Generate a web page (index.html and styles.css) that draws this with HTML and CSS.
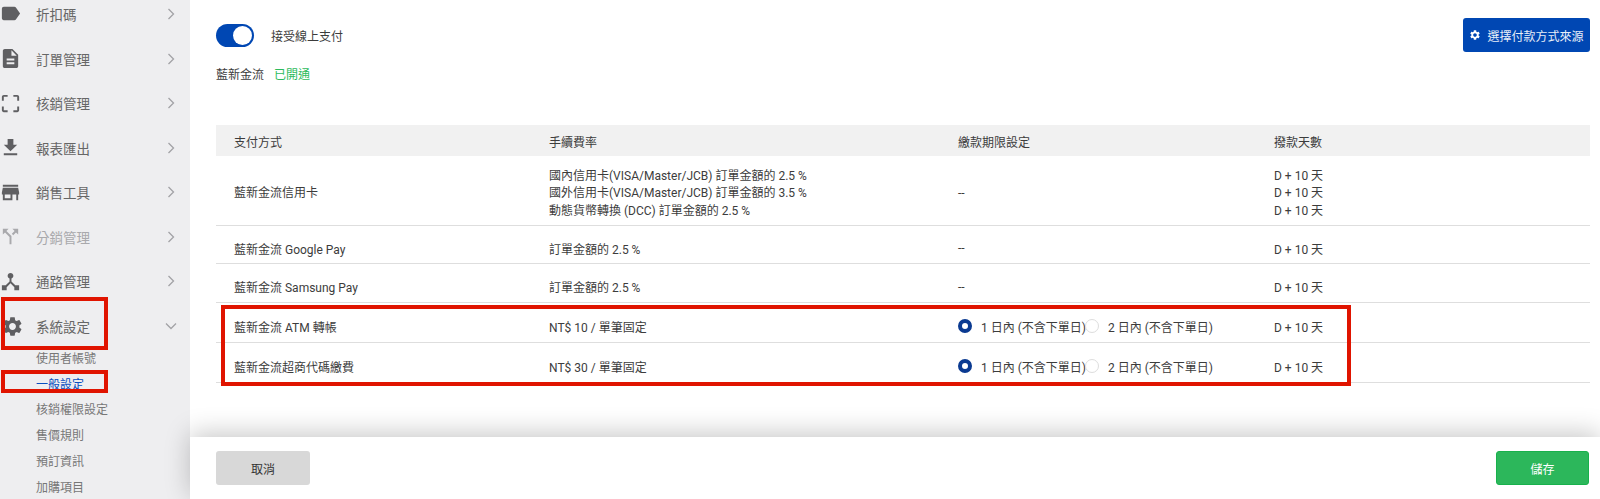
FILE: index.html
```html
<!DOCTYPE html>
<html lang="zh-Hant">
<head>
    <meta charset="UTF-8">
    <meta name="viewport" content="width=device-width, initial-scale=1.0">
    <title>一般設定</title>
    <link rel="stylesheet" href="styles.css">
</head>
<body>
    <div class="page">
        <!-- Sidebar -->
        <nav class="sidebar">
            <a class="nav-item">
                <svg class="nav-icon" viewBox="0 0 24 24"><path d="M17.63 5.84C17.27 5.33 16.67 5 16 5L5 5.01C3.9 5.01 3 5.9 3 7v10c0 1.1.9 1.99 2 1.99L16 19c.67 0 1.27-.33 1.63-.84L22 12l-4.37-6.16z"/></svg>
                <span>折扣碼</span>
                <svg class="nav-arrow" viewBox="0 0 12 12"><path d="M3.5 1l5 5-5 5"/></svg>
            </a>
            <a class="nav-item">
                <svg class="nav-icon" viewBox="0 0 24 24"><path d="M14 2H6c-1.1 0-1.99.9-1.99 2L4 20c0 1.1.89 2 1.99 2H18c1.1 0 2-.9 2-2V8l-6-6zm2 16H8v-2h8v2zm0-4H8v-2h8v2zm-3-5V3.5L18.5 9H13z"/></svg>
                <span>訂單管理</span>
                <svg class="nav-arrow" viewBox="0 0 12 12"><path d="M3.5 1l5 5-5 5"/></svg>
            </a>
            <a class="nav-item">
                <svg class="nav-icon" viewBox="0 0 24 24"><path d="M3 5v4h2V5h4V3H5c-1.1 0-2 .9-2 2zm2 10H3v4c0 1.1.9 2 2 2h4v-2H5v-4zm14 4h-4v2h4c1.1 0 2-.9 2-2v-4h-2v4zm0-16h-4v2h4v4h2V5c0-1.1-.9-2-2-2z"/></svg>
                <span>核銷管理</span>
                <svg class="nav-arrow" viewBox="0 0 12 12"><path d="M3.5 1l5 5-5 5"/></svg>
            </a>
            <a class="nav-item">
                <svg class="nav-icon" viewBox="0 0 24 24"><path d="M19 9h-4V3H9v6H5l7 7 7-7zM5 18v2h14v-2H5z"/></svg>
                <span>報表匯出</span>
                <svg class="nav-arrow" viewBox="0 0 12 12"><path d="M3.5 1l5 5-5 5"/></svg>
            </a>
            <a class="nav-item">
                <svg class="nav-icon" viewBox="0 0 24 24"><path d="M20 4H4v2h16V4zm1 10v-2l-1-5H4l-1 5v2h1v6h10v-6h4v6h2v-6h1zm-9 4H6v-4h6v4z"/></svg>
                <span>銷售工具</span>
                <svg class="nav-arrow" viewBox="0 0 12 12"><path d="M3.5 1l5 5-5 5"/></svg>
            </a>
            <a class="nav-item disabled">
                <svg class="nav-icon" viewBox="0 0 24 24"><path d="M14 4l2.29 2.29-2.88 2.88 1.42 1.42 2.88-2.88L20 10V4h-6zm-4 0H4v6l2.29-2.29 4.71 4.7V20h2v-8.41l-5.29-5.3L10 4z"/></svg>
                <span>分銷管理</span>
                <svg class="nav-arrow" viewBox="0 0 12 12"><path d="M3.5 1l5 5-5 5"/></svg>
            </a>
            <a class="nav-item">
                <svg class="nav-icon" viewBox="0 0 24 24"><path d="M17 16l-4-4V8.82C14.16 8.4 15 7.3 15 6c0-1.66-1.34-3-3-3S9 4.34 9 6c0 1.3.84 2.4 2 2.82V12l-4 4H3v5h5v-3.05l4-4.2 4 4.2V21h5v-5h-4z"/></svg>
                <span>通路管理</span>
                <svg class="nav-arrow" viewBox="0 0 12 12"><path d="M3.5 1l5 5-5 5"/></svg>
            </a>
            <a class="nav-item">
                <svg class="nav-icon gear" viewBox="0 0 24 24"><path d="M19.14 12.94c.04-.3.06-.61.06-.94 0-.32-.02-.64-.07-.94l2.03-1.58c.18-.14.23-.41.12-.61l-1.92-3.32c-.12-.22-.37-.29-.59-.22l-2.39.96c-.5-.38-1.03-.7-1.62-.94l-.36-2.54c-.04-.24-.24-.41-.48-.41h-3.84c-.24 0-.43.17-.47.41l-.36 2.54c-.59.24-1.13.57-1.62.94l-2.39-.96c-.22-.08-.47 0-.59.22L2.74 8.87c-.12.21-.08.47.12.61l2.03 1.58c-.05.3-.09.63-.09.94s.02.64.07.94l-2.03 1.58c-.18.14-.23.41-.12.61l1.92 3.32c.12.22.37.29.59.22l2.39-.96c.5.38 1.03.7 1.62.94l.36 2.54c.05.24.24.41.48.41h3.84c.24 0 .44-.17.47-.41l.36-2.54c.59-.24 1.13-.56 1.62-.94l2.39.96c.22.08.47 0 .59-.22l1.92-3.32c.12-.22.07-.47-.12-.61l-2.01-1.58zM12 15.6c-1.98 0-3.6-1.62-3.6-3.6s1.62-3.6 3.6-3.6 3.6 1.62 3.6 3.6-1.62 3.6-3.6 3.6z"/></svg>
                <span>系統設定</span>
                <svg class="nav-arrow" viewBox="0 0 12 12"><path d="M1 3.5l5 5 5-5"/></svg>
            </a>
            <div class="sub-nav">
                <a>使用者帳號</a>
                <a class="active">一般設定</a>
                <a>核銷權限設定</a>
                <a>售價規則</a>
                <a>預訂資訊</a>
                <a>加購項目</a>
            </div>
        </nav>

        <div class="main">
            <div class="content">
                <div class="top-row">
                    <div class="online-pay">
                        <span class="switch"><span class="switch-knob"></span></span>
                        <span>接受線上支付</span>
                    </div>
                    <button class="btn btn-source">
                        <svg class="btn-icon" viewBox="0 0 24 24"><path d="M19.14 12.94c.04-.3.06-.61.06-.94 0-.32-.02-.64-.07-.94l2.03-1.58c.18-.14.23-.41.12-.61l-1.92-3.32c-.12-.22-.37-.29-.59-.22l-2.39.96c-.5-.38-1.03-.7-1.62-.94l-.36-2.54c-.04-.24-.24-.41-.48-.41h-3.84c-.24 0-.43.17-.47.41l-.36 2.54c-.59.24-1.13.57-1.62.94l-2.39-.96c-.22-.08-.47 0-.59.22L2.74 8.87c-.12.21-.08.47.12.61l2.03 1.58c-.05.3-.09.63-.09.94s.02.64.07.94l-2.03 1.58c-.18.14-.23.41-.12.61l1.92 3.32c.12.22.37.29.59.22l2.39-.96c.5.38 1.03.7 1.62.94l.36 2.54c.05.24.24.41.48.41h3.84c.24 0 .44-.17.47-.41l.36-2.54c.59-.24 1.13-.56 1.62-.94l2.39.96c.22.08.47 0 .59-.22l1.92-3.32c.12-.22.07-.47-.12-.61l-2.01-1.58zM12 15.6c-1.98 0-3.6-1.62-3.6-3.6s1.62-3.6 3.6-3.6 3.6 1.62 3.6 3.6-1.62 3.6-3.6 3.6z"/></svg>
                        選擇付款方式來源
                    </button>
                </div>
                <div class="provider">
                    <span>藍新金流</span>
                    <span class="status-ok">已開通</span>
                </div>

                <table class="pay-table">
                    <thead>
                        <tr>
                            <th class="col-name">支付方式</th>
                            <th class="col-fee">手續費率</th>
                            <th class="col-limit">繳款期限設定</th>
                            <th>撥款天數</th>
                        </tr>
                    </thead>
                    <tbody>
                        <tr class="row-multi">
                            <td>藍新金流信用卡</td>
                            <td>
                                <div>國內信用卡(VISA/Master/JCB) 訂單金額的 2.5 %</div>
                                <div>國外信用卡(VISA/Master/JCB) 訂單金額的 3.5 %</div>
                                <div>動態貨幣轉換 (DCC) 訂單金額的 2.5 %</div>
                            </td>
                            <td>--</td>
                            <td>
                                <div>D + 10 天</div>
                                <div>D + 10 天</div>
                                <div>D + 10 天</div>
                            </td>
                        </tr>
                        <tr class="row-short">
                            <td>藍新金流 Google Pay</td>
                            <td>訂單金額的 2.5 %</td>
                            <td>--</td>
                            <td>D + 10 天</td>
                        </tr>
                        <tr class="row-short">
                            <td>藍新金流 Samsung Pay</td>
                            <td>訂單金額的 2.5 %</td>
                            <td>--</td>
                            <td>D + 10 天</td>
                        </tr>
                        <tr>
                            <td>藍新金流 ATM 轉帳</td>
                            <td>NT$ 10 / 單筆固定</td>
                            <td>
                                <div class="radios">
                                    <span class="radio checked"></span><span class="radio-text">1 日內 (不含下單日)</span>
                                    <span class="radio"></span><span>2 日內 (不含下單日)</span>
                                </div>
                            </td>
                            <td>D + 10 天</td>
                        </tr>
                        <tr>
                            <td>藍新金流超商代碼繳費</td>
                            <td>NT$ 30 / 單筆固定</td>
                            <td>
                                <div class="radios">
                                    <span class="radio checked"></span><span class="radio-text">1 日內 (不含下單日)</span>
                                    <span class="radio"></span><span>2 日內 (不含下單日)</span>
                                </div>
                            </td>
                            <td>D + 10 天</td>
                        </tr>
                    </tbody>
                </table>
            </div>

            <div class="footer">
                <button class="btn btn-cancel">取消</button>
                <button class="btn btn-save">儲存</button>
            </div>
        </div>

        <!-- Red annotation boxes drawn over the screenshot -->
        <div class="mark mark-system"></div>
        <div class="mark mark-general"></div>
        <div class="mark mark-rows"></div>
    </div>
</body>
</html>
```

FILE: styles.css
```css
* {
    box-sizing: border-box;
}
body {
    margin: 0;
    font-family: Roboto, "Noto Sans CJK TC", sans-serif;
    font-size: 12px;
    color: #3c3c3c;
    background-color: #fff;
}
.page {
    position: relative;
    display: flex;
    height: 499px;
    overflow: hidden;
}

/* Sidebar */
.sidebar {
    flex: 0 0 190px;
    background-color: #eeeef0;
    color: #666;
    margin-top: -8.4px;
    height: 520px;
}
.nav-item {
    display: flex;
    align-items: center;
    height: 44.6px;
    font-size: 13.5px;
}
.nav-item span {
    flex: 1;
    margin-left: 14px;
}
.nav-icon {
    width: 23px;
    height: 23px;
    margin-left: -1px;
    fill: #5f5f62;
}
.nav-icon.gear {
    margin-left: 1px;
    margin-right: -2px;
}
.nav-arrow {
    width: 12px;
    height: 12px;
    margin-right: 13px;
    fill: none;
    stroke: #a2a2a6;
    stroke-width: 1.3;
}
.disabled {
    color: #a9a9ac;
}
.disabled .nav-icon {
    fill: #a9a9ac;
}
.sub-nav {
    margin-top: -1.5px;
    padding-left: 36px;
    font-size: 12px;
    color: #777;
}
.sub-nav a {
    display: block;
    height: 25.8px;
    line-height: 25.8px;
}
.sub-nav .active {
    color: #0a4fc0;
}

/* Main */
.main {
    flex: 1;
    display: flex;
    flex-direction: column;
}
.content {
    flex: 1;
    padding: 18px 10px 0 26px;
}
.top-row {
    display: flex;
    justify-content: space-between;
    align-items: flex-start;
}
.online-pay {
    display: flex;
    align-items: center;
    gap: 17px;
    margin-top: 6px;
}
.switch {
    display: block;
    width: 38px;
    height: 23px;
    padding: 2px;
    border-radius: 12px;
    background-color: #0047b3;
}
.switch-knob {
    display: block;
    width: 19px;
    height: 19px;
    margin-left: 15px;
    border-radius: 50%;
    background-color: #fff;
}
.btn {
    height: 34px;
    border: none;
    border-radius: 3px;
    font-family: inherit;
    font-size: 12px;
    cursor: pointer;
}
.btn-source {
    display: flex;
    align-items: center;
    justify-content: center;
    gap: 6px;
    width: 127px;
    background-color: #0047b3;
    color: #e8eef8;
}
.btn-icon {
    width: 12px;
    height: 12px;
    fill: #fff;
}
.provider {
    display: flex;
    gap: 10px;
    margin-top: 14px;
    line-height: 18px;
}
.status-ok {
    color: #2dbb5d;
}

/* Table */
.pay-table {
    width: 100%;
    margin-top: 41px;
    border-collapse: collapse;
    table-layout: fixed;
}
.pay-table th {
    height: 31px;
    padding: 2px 0 0 18px;
    background-color: #f1f1f1;
    font-weight: 400;
    text-align: left;
}
.col-name {
    width: 315px;
}
.col-fee {
    width: 409px;
}
.col-limit {
    width: 316px;
}
.pay-table td {
    height: 40px;
    padding: 8px 0 0 18px;
    border-bottom: 1px solid #dedede;
}
.pay-table .row-short td {
    height: 38.5px;
}
.pay-table .row-multi td {
    height: 69px;
    padding-top: 7px;
    line-height: 17.5px;
}
.radios {
    display: flex;
    align-items: center;
    white-space: nowrap;
}
.radio {
    flex: none;
    width: 14px;
    height: 14px;
    margin-right: 9px;
    border: 1px solid #ddd;
    border-radius: 50%;
    background-color: #fff;
}
.radio.checked {
    border: 4px solid #0a3a91;
}
.radio-text {
    width: 104px;
}

/* Footer */
.footer {
    position: relative;
    display: flex;
    justify-content: space-between;
    flex: 0 0 62px;
    padding: 14px 11px 0 26px;
    background-color: #fff;
    box-shadow: 0 -4px 26px rgba(0, 0, 0, 0.22);
}
.btn-cancel {
    width: 94px;
    background-color: #d8d8d8;
    color: #333;
}
.btn-save {
    width: 93px;
    background-color: #2cb75b;
    border: 1px solid #18b14c;
    color: #fff;
}

/* Red annotation boxes */
.mark {
    position: absolute;
    border: 4px solid #e01400;
}
.mark-system {
    left: 1px;
    top: 297px;
    width: 107px;
    height: 53px;
}
.mark-general {
    left: 1px;
    top: 370px;
    width: 107px;
    height: 23px;
}
.mark-rows {
    left: 221px;
    top: 305px;
    width: 1130px;
    height: 81px;
}
```
